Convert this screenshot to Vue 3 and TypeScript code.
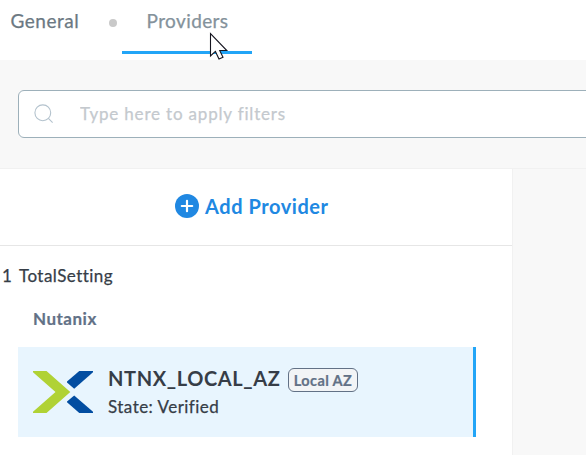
<script setup lang="ts">
import { ref } from 'vue'

interface Provider {
  name: string
  tag: string
  state: string
}

const filter = ref('')
const providers: Provider[] = [{ name: 'NTNX_LOCAL_AZ', tag: 'Local AZ', state: 'Verified' }]
</script>

<template>
  <div class="page">
    <nav class="tabs">
      <a class="tab general"><span>General</span></a>
      <i class="dot"></i>
      <a class="tab active"><span>Providers</span></a>
      <svg class="cursor" width="20" height="29" viewBox="0 0 20 29">
        <path d="M1.5 1.5V24L6.4 19.4L10 27L14 25.3L10.7 18.5H17.8Z" fill="#fff" stroke="#14141f" stroke-width="1.1" />
      </svg>
    </nav>

    <section class="filters">
      <label class="search">
        <svg width="20" height="20" viewBox="0 0 20 20" fill="none" stroke="#b3c2cd" stroke-width="1.1">
          <circle cx="8.8" cy="8.8" r="7.9" />
          <path d="M14.4 14.4L18.6 18.6" />
        </svg>
        <input v-model="filter" type="text" placeholder="Type here to apply filters" />
      </label>
    </section>

    <main class="content">
      <aside class="panel">
        <button class="add">
          <svg width="24" height="24" viewBox="0 0 24 24">
            <circle cx="12" cy="12" r="12" fill="#2088e2" />
            <path d="M12 6.8V17.2M6.8 12H17.2" stroke="#fff" stroke-width="2.2" stroke-linecap="round" />
          </svg>
          <span>Add Provider</span>
        </button>
        <div class="total"><span class="count">{{ providers.length }}</span><span>TotalSetting</span></div>
        <h3 class="group"><span>Nutanix</span></h3>
        <article v-for="p in providers" :key="p.name" class="card">
          <svg class="logo" width="60" height="42" viewBox="0 0 60 42">
            <path d="M0 0H13.5L37.3 21L13.5 42H0V40.8L22.5 21L0 1.2Z" fill="#b0d235" />
            <path d="M46.3 0H60V1.2L41.2 17.8L34 11.5V10.6Z" fill="#024da1" />
            <path d="M41.2 24.5L60 40.8V42H46.3L34 31.3V30.4Z" fill="#024da1" />
          </svg>
          <div class="info">
            <div class="heading"><span class="name">{{ p.name }}</span><span class="badge">{{ p.tag }}</span></div>
            <div class="state"><span>State: {{ p.state }}</span></div>
          </div>
        </article>
      </aside>
    </main>
  </div>
</template>

<style>
body {
  overflow: hidden;
}
</style>

<style scoped>
.page {
  width: 586px;
  height: 455px;
  overflow: hidden;
  display: flex;
  flex-direction: column;
  background: #f8f8f8;
  font-family: Lato, "Liberation Sans", sans-serif;
  font-variant-ligatures: none;
  color: #363d47;
  white-space: nowrap;
}
.page * {
  box-sizing: border-box;
}
.tabs {
  position: relative;
  flex: none;
  height: 60px;
  display: flex;
  align-items: flex-start;
  background: #fff;
}
.tab {
  height: 54px;
  font-size: 19px;
  line-height: 41px;
  -webkit-text-stroke: 0.25px currentColor;
}
.general {
  width: 108.5px;
  padding-left: 10.5px;
  color: #6b7882;
  letter-spacing: 0.5px;
}
.dot {
  width: 8px;
  height: 8px;
  margin: 19px 5.5px 0 0;
  border-radius: 4px;
  background: #c9c9c9;
}
.active {
  width: 130px;
  padding-left: 24.5px;
  border-bottom: 3px solid #22a5f7;
  color: #84929b;
  letter-spacing: 0.4px;
}
.cursor {
  position: absolute;
  left: 209px;
  top: 32px;
}
.filters {
  flex: none;
  height: 109px;
  padding: 30px 0 0 18px;
  border-bottom: 1px solid #f1f1f1;
}
.search {
  width: 600px;
  height: 48px;
  display: flex;
  align-items: center;
  padding-left: 15px;
  border: 1px solid #9db0ba;
  border-radius: 6px;
  background: #fff;
}
.search input {
  width: 480px;
  height: 46px;
  margin-left: 26px;
  padding: 0 0 1px;
  border: 0;
  outline: 0;
  background: transparent;
  font: 17px Lato, sans-serif;
  font-variant-ligatures: none;
  letter-spacing: 0.82px;
}
.search input::placeholder {
  color: #c4c9ce;
  -webkit-text-stroke: 0.25px #c4c9ce;
}
.content {
  flex: 1;
}
.panel {
  width: 513px;
  height: 286px;
  border-right: 1px solid #f1f1f1;
  background: #fff;
}
.add {
  width: 512px;
  height: 77px;
  display: flex;
  align-items: center;
  padding: 0 0 2px 175px;
  border: 0;
  border-bottom: 1px solid #e6e6e6;
  background: #fff;
  color: #2088e2;
  font: bold 20px Lato, sans-serif;
  letter-spacing: 0.55px;
}
.add svg {
  flex: none;
}
.add span {
  margin-left: 6px;
}
.total {
  height: 60px;
  display: flex;
  padding-left: 2px;
  font-size: 17px;
  line-height: 60px;
  letter-spacing: 0.45px;
  -webkit-text-stroke: 0.25px currentColor;
}
.count {
  width: 17px;
}
.group {
  height: 41px;
  margin: 0;
  padding-left: 33px;
  color: #627186;
  font-size: 17px;
  font-weight: bold;
  line-height: 26px;
  letter-spacing: 0.5px;
  -webkit-text-stroke: 0.2px currentColor;
}
.card {
  width: 458px;
  height: 90px;
  display: flex;
  margin-left: 18px;
  padding: 18px 0 0 15px;
  border-right: 3px solid #22a5f7;
  background: #e8f5fe;
}
.logo {
  flex: none;
  margin-top: 6px;
}
.info {
  margin-left: 15px;
}
.heading {
  height: 29px;
  display: flex;
  align-items: center;
}
.name {
  width: 173px;
  padding-bottom: 3px;
  font-size: 20px;
  font-weight: bold;
  letter-spacing: 0.62px;
}
.badge {
  width: 70px;
  height: 24px;
  margin-left: 7px;
  border: 1px solid #627186;
  border-radius: 6px;
  background: #f2f4f6;
  color: #627186;
  font-size: 14.5px;
  font-weight: bold;
  line-height: 24px;
  letter-spacing: 0.4px;
  text-align: center;
  -webkit-text-stroke: 0.2px currentColor;
}
.state {
  font-size: 17px;
  line-height: 26px;
  letter-spacing: 0.46px;
  -webkit-text-stroke: 0.25px currentColor;
}
</style>
